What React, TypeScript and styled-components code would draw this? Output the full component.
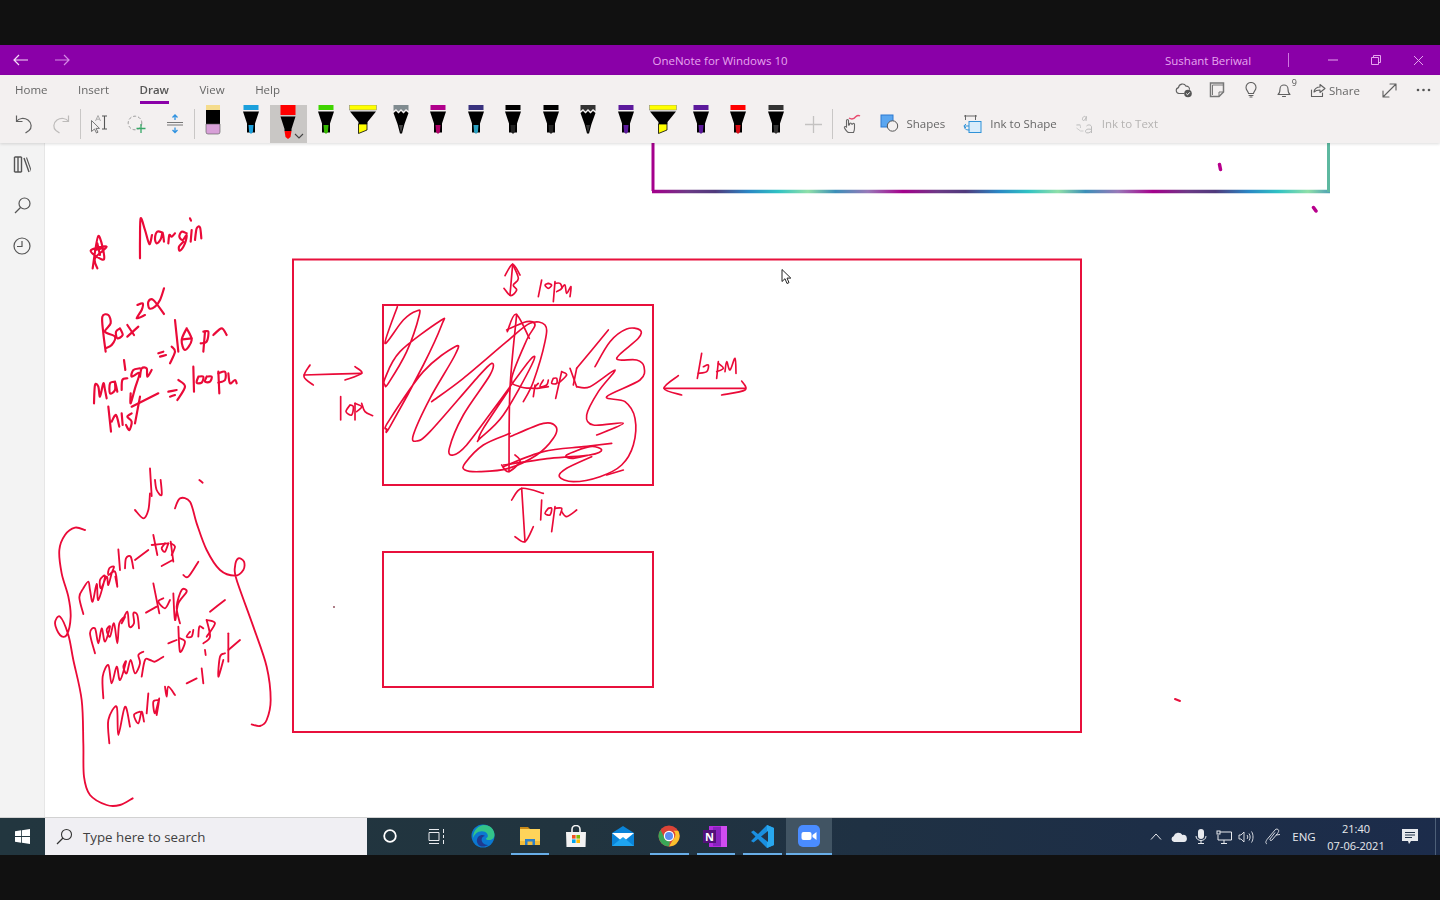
import React from "react";
import styled, { createGlobalStyle } from "styled-components";

const Global = createGlobalStyle`
  html, body { margin: 0; padding: 0; background: #111; }
  body { font-family: "Open Sans", "Noto Sans", "Liberation Sans", sans-serif; overflow: hidden; }
`;

const Page = styled.div`
  width: 1440px; height: 900px; display: flex; flex-direction: column; background: #111; filter: blur(.3px);
`;
const Letterbox = styled.div`height: 45px; background: #111; flex: none;`;

const TitleBar = styled.header`
  height: 30px; flex: none; background: #8a00a8; display: flex; align-items: center; color: #e6a6ee; font-size: 11.5px;
`;
const NavBtn = styled.span<{ $dim?: boolean }>`
  width: 41px; height: 30px; display: flex; align-items: center; justify-content: center;
  color: ${(p) => (p.$dim ? "#d68ae6" : "#f5dcf8")};
`;
const Title = styled.div`width: 1083px; box-sizing: border-box; padding-left: 195px; margin-left: -1px; text-align: center; padding-top: 1px;`;
const UserName = styled.div`width: 123px; padding-top: 1px; margin-left: 1px;`;
const TitleSep = styled.div`width: 1px; height: 14px; background: #cf78e0;`;
const WinControls = styled.div`display: flex; margin-left: 22px;`;
const WinBtn = styled.span`
  width: 43px; height: 30px; display: flex; align-items: center; justify-content: center; color: #e6a6ee;
`;

const Ribbon = styled.section`
  height: 68px; flex: none; background: #f3f0f0; display: flex; flex-direction: column;
  position: relative; z-index: 1; box-shadow: 0 1px 3px rgba(0,0,0,.14);
`;
const TabRow = styled.div`height: 30px; display: flex; padding-left: 15px; gap: 30.5px;`;
const Tab = styled.span<{ $active?: boolean }>`
  height: 29px; box-sizing: border-box; padding-top: 7px; font-size: 11.5px; line-height: 16px;
  color: ${(p) => (p.$active ? "#555" : "#666")}; font-weight: ${(p) => (p.$active ? 600 : 400)};
  border-bottom: 3px solid ${(p) => (p.$active ? "#8a00a8" : "transparent")};
`;
const RightTools = styled.div`margin-left: auto; display: flex; height: 30px; color: #555;`;
const RightIcon = styled.span<{ $w?: number }>`
  width: ${(p) => p.$w ?? 33.5}px; height: 30px; display: flex; align-items: center; justify-content: center; position: relative;
`;
const BellCount = styled.sup`
  position: absolute; right: 4px; top: 3px; font-size: 9px; line-height: 10px; margin: 0; color: #555;
`;
const ShareBtn = styled.span`
  width: 71px; box-sizing: border-box; padding-left: 9px; display: flex; align-items: center; gap: 3px; font-size: 11.5px; color: #666;
`;
const ToolRow = styled.div`height: 38px; display: flex; padding-left: 5px;`;
const ToolBtn = styled.span`
  width: 37.5px; height: 38px; flex: none; display: flex; align-items: center; justify-content: center;
`;
const Divider = styled.span`
  width: 1px; height: 30px; margin-top: 4px; background: #c9c7c6; flex: none;
`;
const PenSlot = styled.span<{ $selected?: boolean }>`
  width: 37.5px; height: 38px; flex: none; display: flex; justify-content: center; position: relative;
  background: ${(p) => (p.$selected ? "#c9c7c5" : "transparent")};
`;
const PenChevron = styled.svg`position: absolute; right: 3px; bottom: 4px;`;
const TextTools = styled.div`display: flex; gap: 18px; margin-left: 9px;`;
const TextTool = styled.span<{ $off?: boolean }>`
  display: flex; align-items: center; gap: 8px; font-size: 11.5px; height: 38px; box-sizing: border-box; padding-bottom: 1px;
  color: ${(p) => (p.$off ? "#b5b3b2" : "#666")};
`;

const Body = styled.main`flex: 1; display: flex; min-height: 0;`;
const Rail = styled.nav`
  width: 45px; flex: none; box-sizing: border-box; background: #f3f3f3; border-right: 1px solid #e6e6e6;
  display: flex; flex-direction: column; align-items: center; padding-top: 7.5px; gap: 14px; color: #555;
`;
const RailIcon = styled.span`width: 27px; height: 27px; display: flex; align-items: center; justify-content: center;`;
const Canvas = styled.svg`flex: 1; display: block; background: #fff;`;

const Taskbar = styled.footer`
  height: 37px; flex: none; display: flex; padding-right: 4.5px; box-sizing: border-box; position: relative; box-shadow: 0 -1px 0 #d2d2d2;
  background: linear-gradient(90deg, #22363f 0%, #21343f 40%, #1d2e47 80%, #1c2c4b 100%); color: #e8eaee;
`;
const StartBtn = styled.span`width: 45px; display: flex; align-items: center; justify-content: center;`;
const SearchBox = styled.div`
  width: 322px; flex: none; box-sizing: border-box; background: #f0eff3; display: flex; align-items: center; gap: 10px; padding-left: 11px;
  color: #404040; font-size: 13.3px;
`;
const TaskCell = styled.span<{ $active?: boolean; $run?: boolean }>`
  width: 46.5px; flex: none; display: flex; align-items: center; justify-content: center; position: relative; padding-bottom: 1px; box-sizing: border-box;
  background: ${(p) => (p.$active ? "#415463" : "transparent")};
  &::after {
    content: ""; display: ${(p) => (p.$run || p.$active ? "block" : "none")};
    position: absolute; bottom: 0; height: 2px; left: ${(p) => (p.$active ? 0 : 4)}px; right: ${(p) => (p.$active ? 0 : 4)}px; background: #68aee8;
  }
`;
const Tray = styled.div`margin-left: auto; display: flex; align-items: center;`;
const TrayIcon = styled.span<{ $w?: number }>`
  width: ${(p) => p.$w ?? 22.5}px; height: 37px; display: flex; align-items: center; justify-content: center; font-size: 11.5px;
`;
const Clock = styled.div`
  width: 73px; text-align: center; font-size: 11px; line-height: 17px;
`;
const ShowDesktop = styled.span`width: 8px; height: 37px; box-sizing: border-box; border-right: 1px solid #4d5f78;`;

const G = "#606060";

type PenKind = "pen" | "pencil" | "hl" | "eraser";
function Pen({ kind = "pen", cap, tip, selected }: { kind?: PenKind; cap: string; tip?: string; selected?: boolean }) {
  const t = tip ?? cap;
  return (
    <PenSlot $selected={selected}>
      <svg width="30" height="38" viewBox="0 0 30 38">
        {kind === "eraser" && (
          <>
            <rect x="8" y="0" width="14" height="5" fill={cap} />
            <rect x="8" y="5" width="14" height="14" fill="#000" />
            <path d="M8 19h14v8q0 2-2 2H10q-2 0-2-2z" fill={t} stroke="#555" strokeWidth=".6" />
          </>
        )}
        {kind === "pen" && !selected && (
          <>
            <rect x="7.5" y="0" width="15" height="5" fill={cap} />
            <path d="M7 6.5h16l-4 12v9h-8v-9z" fill="#000" />
            <path d="M12.5 20h5l-.6 7L15 29l-1.9-2z" fill={t} />
          </>
        )}
        {selected && (
          <>
            <rect x="7.5" y="0" width="15" height="10" fill={cap} />
            <path d="M7.5 11.500h15l-4 12.500v2h-7v-2z" fill="#000" />
            <path d="M11.500 26h7l-1 6-2.500 2-2.500-2z" fill={cap} />
          </>
        )}
        {kind === "pencil" && (
          <>
            <path d="M7.500 0h15v6l-2.500-2-2.500 2.500-2.500-2.500-2.500 2.500L10 4l-2.500 2z" fill={cap} />
            <path d="M7.500 8 10 6l2.500 2.500L15 6l2.500 2.500L20 6l2.500 2-4 11-2.500 9.500h-2L11.500 19z" fill="#000" />
            <path d="M13 20h4l-2 8z" fill={t} />
          </>
        )}
        {kind === "hl" && (
          <>
            <rect x="1.500" y="0" width="27" height="5" fill={cap} stroke="#777" strokeWidth=".5" />
            <path d="M2 6.500h26L19.500 17v2h-9v-2z" fill="#000" />
            <path d="M10.500 19h8.500v6l-8.500 3.500z" fill={cap} stroke="#000" strokeWidth=".8" />
          </>
        )}
      </svg>
      {selected && (
        <PenChevron width="10" height="6" viewBox="0 0 10 6">
          <path d="M1 1l4 4 4-4" fill="none" stroke="#444" strokeWidth="1.100" />
        </PenChevron>
      )}
    </PenSlot>
  );
}

const smooth = (s: string) => {
  const n = s.trim().split(/\s+/).map(Number);
  const p: [number, number][] = [];
  for (let i = 0; i + 1 < n.length; i += 2) p.push([n[i], n[i + 1]]);
  let d = `M${p[0][0]} ${p[0][1]}`;
  for (let i = 0; i < p.length - 1; i++) {
    const a = p[Math.max(0, i - 1)], b = p[i], c = p[i + 1], e = p[Math.min(p.length - 1, i + 2)];
    d += `C${b[0] + (c[0] - a[0]) / 6} ${b[1] + (c[1] - a[1]) / 6} ${c[0] - (e[0] - b[0]) / 6} ${c[1] - (e[1] - b[1]) / 6} ${c[0]} ${c[1]}`;
  }
  return d;
};

function Ink({ x, y, w = 5, strokes }: { x: number; y: number; w?: number; strokes: string[] }) {
  return (
    <g transform={`translate(${x} ${y}) scale(${1 / 3})`} fill="none" stroke="#ea0a38" strokeWidth={w} strokeLinecap="round" strokeLinejoin="round">
      {strokes.map((s, i) => <path key={i} d={smooth(s)} />)}
    </g>
  );
}

const notes = [
  "158 205 175 108 192 178 152 152 200 140 165 175 172 205",
  "172 130 180 165", "165 150 185 145",
  "300 175 300 120 302 55 315 90 328 132 336 105",
  "368 98 352 95 345 115 350 130 362 118 368 98 372 125",
  "385 130 388 105 395 110 405 100",
  "440 100 425 95 418 110 428 120 440 105 435 130 420 152 417 140 430 125",
  "452 125 455 90", "450 55 453 62",
  "465 120 470 85 480 82 484 115",
  "197 455 190 400 187 350 205 345 212 370 195 395 225 410 215 435 197 445",
  "240 385 228 395 232 415 248 405 240 385",
  "262 375 282 405", "295 380 262 410",
  "292 315 308 310 305 330 290 355 315 345",
  "372 265 360 300 345 320 328 325 325 305 340 300 372 342",
  "162 610 165 555 175 560 180 590 190 550 195 570 200 595",
  "225 545 210 550 210 580 225 570 225 545 232 575",
  "245 570 247 540 262 535",
  "300 505 280 510 275 530 298 520 285 565 272 610 272 580",
  "252 480 256 510",
  "300 530 305 505 320 505 322 530 335 510",
  "355 460 370 455", "360 470 378 465", "395 440 405 455 390 490",
  "405 360 415 455",
  "440 385 425 420 435 450 455 420 440 385", "428 418 455 415",
  "495 395 490 455", "490 395 505 395 500 425 482 430",
  "520 405 545 385 560 405",
  "205 620 213 695", "215 665 228 645 238 680",
  "245 640 248 675", "275 640 262 650 275 665 268 690 258 675",
  "300 590 285 670", "275 620 355 580",
  "385 575 410 570", "390 590 405 585", "415 540 435 560 412 600",
  "460 500 462 575",
  "475 530 470 548 485 548 490 530 475 530", "500 530 495 545 510 545 515 530 500 530",
  "535 515 538 580", "535 520 555 515 555 540 535 548",
  "565 520 570 550 585 540 590 550",
];

const list = [
  "135 210 105 203 75 225 58 270 65 340 85 410 92 470 80 525 60 525 45 490 60 470 85 525 100 600 125 720 130 850 132 950 150 1005 200 1035 240 1035 278 1015",
  "405 145 420 115 450 125 470 190 500 270 540 330 585 347 610 330 612 305 595 295 585 320 590 360 640 500 680 620 692 720 680 780 660 798 635 793",
  "285 150 310 175 325 150 330 100", "330 25 335 108", "345 60 350 90 365 105 362 60",
  "478 60 488 68",
  "130 462 118 412 130 385 145 365 150 390 158 425 170 372 175 420 195 350 180 360 183 385 200 350 205 375 215 340 222 320 208 325 205 345 225 335 232 380 226 350",
  "235 268 240 330", "255 325 258 295 272 290 280 325",
  "285 300 325 270", "340 225 352 285", "335 255 385 250", "375 250 365 265 375 275 385 250",
  "392 245 400 305", "392 250 405 260 395 285", "365 318 398 300",
  "165 580 150 520 165 505 175 550 185 505 195 545 210 500 200 510 210 530 222 490 232 550 238 490 255 470 245 490 262 455 268 500 282 490 280 460 292 465 297 505",
  "318 458 350 440", "340 370 358 460", "370 415 355 425 375 445 390 420",
  "400 400 405 480 415 430 440 395 425 390 410 440 420 490", "430 345 445 350 475 305",
  "190 715 188 650 205 615 215 670 230 620 240 660 258 605 250 620 260 640 272 600 285 640 300 610 295 585 310 575",
  "305 650 315 600 330 600 345 605 370 590", "385 550 410 540",
  "415 500 420 575 435 545 420 535", "450 515 440 530 455 530 460 510", "475 530 478 500 490 505",
  "500 480 510 530 490 550", "500 480 525 490 500 530", "510 455 555 420",
  "208 850 205 780 230 740 235 825 255 740 270 800",
  "300 755 282 765 295 790 305 755 312 785", "325 700 320 760",
  "355 720 340 725 345 760 358 715 350 765", "375 680 380 710 385 680 405 705",
  "440 670 470 655", "485 625 490 670", "495 570 497 585",
  "555 580 540 590 535 650 550 600", "565 520 565 605", "565 570 600 540",
];

const boxes = [
  "645 62 668 28 690 60", "668 28 685 70 670 90 680 105 662 122 642 100", "668 28 660 120",
  "755 75 745 125", "775 85 765 90 775 100 785 90 775 85", "795 80 790 140",
  "795 85 810 85 815 100 800 110", "815 100 825 90 830 115 843 95 840 125",
  "60 330 42 365 70 390", "42 360 215 355", "195 335 215 355 165 375",
  "152 425 152 495", "180 450 168 470 185 480 190 455 180 450", "195 445 195 495",
  "195 445 215 455 200 470", "215 445 225 470 248 482",
  "1165 362 1122 400 1175 420", "1122 400 1365 400", "1355 378 1365 405 1295 420",
  "1235 295 1222 370", "1240 335 1255 330 1250 350 1225 355", "1285 320 1280 370",
  "1285 325 1300 340 1280 350", "1305 350 1310 320 1320 345 1335 310 1338 355",
  "665 735 695 700 760 715", "695 700 705 860", "675 845 705 860 730 815",
  "755 735 752 795", "775 760 765 775 780 780 785 760 775 760", "795 755 785 830",
  "795 760 815 760 810 780", "815 770 830 785 860 765",
  "322 155 285 265 340 195 380 168 388 180 350 290 295 385 285 390 285 370 330 290 450 198 455 210 400 330 300 515 290 522 295 500 400 350 495 275 495 300 420 430 370 540 380 558 420 530 560 370 605 325 600 360 520 480 478 580 490 600 530 570 620 450 720 315 725 330 640 480 570 550 565 555 580 520 660 400",
  "425 440 520 370 650 260 720 205 765 210 765 260 730 380 700 440",
  "650 225 710 200 735 210 710 255 665 370 690 395 730 400",
  "735 390 730 425", "760 375 750 395 770 390 775 375", "745 385 735 400 775 395",
  "790 370 785 385 800 385 800 370 790 370", "815 350 797 430", "815 350 830 360 805 385",
  "840 340 860 395", "860 340 850 390",
  "955 225 860 340", "915 335 960 260 1010 222 1050 225 1045 250 980 310 1040 315 1062 335 1050 375 950 425 1005 440 1035 490 1030 570 995 630 930 665 850 680 808 665 830 640 905 605",
  "860 395 900 395 975 345 925 410 890 480 910 510 1000 505 920 540",
  "660 545 760 505 798 515 790 550 740 600 655 640 570 650 525 645 525 625 580 570 660 535",
  "640 635 760 590 880 575 965 565",
  "640 630 780 610 900 600 935 585 900 575 830 600 850 610 920 595",
  "680 178 660 400 657 650", "652 230 678 178 718 250", "635 630 655 650 690 620 675 600",
  "1000 645 950 660",
];

const pens: { kind?: PenKind; cap: string; tip?: string; selected?: boolean }[] = [
  { kind: "eraser", cap: "#f5dc8c", tip: "#d8a0d8" },
  { cap: "#1ca0dc" },
  { cap: "#ff0000", selected: true },
  { cap: "#3fd400", tip: "#35b800" },
  { kind: "hl", cap: "#ffff00" },
  { kind: "pencil", cap: "#808b90", tip: "#444" },
  { cap: "#b0008c", tip: "#b00068" },
  { cap: "#39327e", tip: "#2aa0c0" },
  { cap: "#000", tip: "#222" },
  { cap: "#000", tip: "#222" },
  { kind: "pencil", cap: "#333", tip: "#333" },
  { cap: "#5c1a9c" },
  { kind: "hl", cap: "#ffff00" },
  { cap: "#5c1a9c" },
  { cap: "#ff0000", tip: "#d80a14" },
  { cap: "#333", tip: "#333" },
];

const line = { fill: "none", stroke: G, strokeWidth: 1.1, strokeLinecap: "round", strokeLinejoin: "round" } as const;

export default function App() {
  return (
    <Page>
      <Global />
      <Letterbox />
      <TitleBar>
        <NavBtn>
          <svg width="16" height="12" viewBox="0 0 16 12"><path d="M15 6H1M6 1 1 6l5 5" fill="none" stroke="currentColor" strokeWidth="1.200" /></svg>
        </NavBtn>
        <NavBtn $dim>
          <svg width="16" height="12" viewBox="0 0 16 12"><path d="M1 6h14M10 1l5 5-5 5" fill="none" stroke="currentColor" strokeWidth="1.200" /></svg>
        </NavBtn>
        <Title>OneNote for Windows 10</Title>
        <UserName>Sushant Beriwal</UserName>
        <TitleSep />
        <WinControls>
          <WinBtn>
            <svg width="10" height="10" viewBox="0 0 10 10"><path d="M0 5h10" stroke="currentColor" /></svg>
          </WinBtn>
          <WinBtn>
            <svg width="10" height="10" viewBox="0 0 10 10"><path d="M.5 2.500h7v7h-7zM2.500 2.500v-2h7v7h-2" fill="none" stroke="currentColor" /></svg>
          </WinBtn>
          <WinBtn>
            <svg width="11" height="11" viewBox="0 0 11 11"><path d="M1 1l9 9M10 1l-9 9" stroke="currentColor" /></svg>
          </WinBtn>
        </WinControls>
      </TitleBar>

      <Ribbon>
        <TabRow>
          <Tab>Home</Tab>
          <Tab>Insert</Tab>
          <Tab $active>Draw</Tab>
          <Tab>View</Tab>
          <Tab>Help</Tab>
          <RightTools>
            <RightIcon>
              <svg width="18" height="16" viewBox="0 0 18 16">
                <path d="M4 11.500A3 3 0 0 1 3.500 5.600 4 4 0 0 1 11 4.200a3 3 0 0 1 3.500 3" {...line} />
                <path d="M4 11.500h5" {...line} />
                <circle cx="13" cy="11.500" r="3.800" fill="#555" />
                <path d="M11.200 11.500l1.300 1.300 2.300-2.500" fill="none" stroke="#fff" />
              </svg>
            </RightIcon>
            <RightIcon>
              <svg width="16" height="16" viewBox="0 0 16 16">
                <path d="M1.500 1h13v9l-4.500 4.500H1.500z" fill="#f3f0f0" stroke="#777" strokeWidth="1.500" />
                <path d="M14.500 3h-11v10" fill="none" stroke="#777" />
                <path d="M10 14.500V10h4.500" fill="none" stroke="#777" />
              </svg>
            </RightIcon>
            <RightIcon>
              <svg width="14" height="16" viewBox="0 0 14 16">
                <path d="M4.500 11.500c0-2-2.500-3-2.500-6a5 5 0 0 1 10 0c0 3-2.500 4-2.500 6z" {...line} />
                <path d="M5 13.500h4M6 15h2" {...line} />
              </svg>
            </RightIcon>
            <RightIcon>
              <svg width="16" height="16" viewBox="0 0 16 16">
                <path d="M2 12.500c1.500-1 2-2.500 2-5.500a4 4 0 0 1 8 0c0 3 .5 4.500 2 5.500zM6.500 14.500h3" {...line} />
              </svg>
              <BellCount>9</BellCount>
            </RightIcon>
            <ShareBtn>
              <svg width="16" height="16" viewBox="0 0 16 16">
                <path d="M1.500 8v6.500h11V11M4 10c0-3 3-5 6-5V2.500L15 6.500l-5 4V8C7.500 8 5.500 8.500 4 10z" {...line} />
              </svg>
              <span>Share</span>
            </ShareBtn>
            <RightIcon $w={34}>
              <svg width="15" height="15" viewBox="0 0 15 15"><path d="M1 14 14 1M8 1h6v6M1 8v6h6" {...line} /></svg>
            </RightIcon>
            <RightIcon $w={34}>
              <svg width="15" height="4" viewBox="0 0 15 4"><g fill="#555"><circle cx="2" cy="2" r="1.300" /><circle cx="7.500" cy="2" r="1.300" /><circle cx="13" cy="2" r="1.300" /></g></svg>
            </RightIcon>
          </RightTools>
        </TabRow>

        <ToolRow>
          <ToolBtn>
            <svg width="18" height="20" viewBox="0 0 18 20"><path d="M1.500 1.500v6h6M1.500 7.500C4 4 9 3.500 13 6c4 3 4 8 1 10.500L10.500 19" fill="none" stroke={G} strokeWidth="1.200" /></svg>
          </ToolBtn>
          <ToolBtn>
            <svg width="18" height="20" viewBox="0 0 18 20"><path d="M16.500 1.500v6h-6M16.500 7.500C14 4 9 3.500 5 6c-4 3-4 8-1 10.500L7.500 19" fill="none" stroke="#bdbbba" strokeWidth="1.200" /></svg>
          </ToolBtn>
          <Divider />
          <ToolBtn>
            <svg width="20" height="20" viewBox="0 0 20 20">
              <path d="M1.500 6.500v11l3-2.500 2 4 1.500-.8-2-3.800h3.500z" fill="none" stroke="#777" />
              <path d="M12 2h5M14.500 2v13M12 15h5" fill="none" stroke="#555" strokeWidth="1.100" />
              <path d="M5.500 7 8 1.500 10.500 7M6.500 5.200h3" fill="none" stroke="#999" strokeWidth=".8" />
            </svg>
          </ToolBtn>
          <ToolBtn>
            <svg width="20" height="20" viewBox="0 0 20 20">
              <circle cx="8" cy="9" r="6.800" fill="none" stroke="#999" strokeDasharray="3 2" />
              <path d="M14 10v9M9.500 14.500h9" stroke="#38a868" strokeWidth="1.300" />
            </svg>
          </ToolBtn>
          <ToolBtn>
            <svg width="18" height="20" viewBox="0 0 18 20">
              <path d="M1 8.500h16M1 11h16" stroke="#777" />
              <path d="M9 6V1M6.500 3.500 9 1l2.500 2.500M9 13.500v5M6.500 16 9 18.500l2.500-2.500" fill="none" stroke="#2f92e0" strokeWidth="1.300" />
            </svg>
          </ToolBtn>
          <Divider />
          {pens.map((p, i) => <Pen key={i} {...p} />)}
          <ToolBtn>
            <svg width="17" height="17" viewBox="0 0 17 17"><path d="M8.500 0v17M0 8.500h17" stroke="#c4c2c1" strokeWidth="1.300" /></svg>
          </ToolBtn>
          <Divider />
          <ToolBtn>
            <svg width="20" height="22" viewBox="0 0 20 22">
              <path d="M7 19.500c-2 0-3-2-4.500-4.500-.5-1 .5-2 2-1V7.500a1 1 0 0 1 2 0V12l1-.2V11a1 1 0 0 1 2 0l1 .2a1 1 0 0 1 2 0v4c0 2-.5 3-1 4.300z" fill="none" stroke="#666" strokeWidth="1.100" />
              <path d="M7 5C10 7 12 6 14 3.500c1-1 2.500-1.500 4-.5" fill="none" stroke="#e84a6e" strokeWidth="1.400" />
            </svg>
          </ToolBtn>
          <TextTools>
            <TextTool>
              <svg width="19" height="20" viewBox="0 0 19 20">
                <rect x="1" y="1" width="12" height="12" fill="#5aa6f0" stroke="#2d78d0" />
                <circle cx="12.500" cy="12" r="5.200" fill="#f3f0f0" stroke="#555" />
              </svg>
              <span>Shapes</span>
            </TextTool>
            <TextTool>
              <svg width="19" height="20" viewBox="0 0 19 20">
                <path d="M1 2h13M2.500 1v5M12.500 1v5" stroke="#666" fill="none" />
                <rect x="6" y="7.500" width="12" height="11" fill="#d8ecfb" stroke="#2f92d8" />
                <path d="M6 12H1.500M3 10 .8 12 3 14M1.500 12c0 3 1 4 5 4" fill="none" stroke="#2f92d8" />
              </svg>
              <span>Ink to Shape</span>
            </TextTool>
            <TextTool $off>
              <svg width="19" height="20" viewBox="0 0 18 20">
                <path d="M10 2.500c-3-1-4 4-2 4s2-3 3-4l-.5 4.500" fill="none" stroke="#bbb" />
                <path d="M1 11c4-1 4 0 4 3M1 14l4 3h3M5 11H1" fill="none" stroke="#ccc" />
                <path d="M11 12c2-2 5-1 5 1v6m0-3.500c-4-1-6 0-6 2s4 2 6-.5" fill="none" stroke="#bbb" />
              </svg>
              <span>Ink to Text</span>
            </TextTool>
          </TextTools>
        </ToolRow>
      </Ribbon>

      <Body>
        <Rail>
          <RailIcon>
            <svg width="18" height="17" viewBox="0 0 18 17">
              <path d="M1.500 1v15M5 1v15M8.500 1v15M1.500 1h7M1.500 16h7M11 2l5 14" fill="none" stroke="#555" strokeWidth="1.400" />
              <path d="M13.500 1.500l5 14" stroke="#555" strokeWidth="1.100" />
            </svg>
          </RailIcon>
          <RailIcon>
            <svg width="17" height="17" viewBox="0 0 17 17">
              <circle cx="10.500" cy="6.500" r="5.500" fill="none" stroke="#555" strokeWidth="1.200" />
              <path d="M6.500 10.500 1 16" stroke="#555" strokeWidth="1.300" />
            </svg>
          </RailIcon>
          <RailIcon>
            <svg width="18" height="18" viewBox="0 0 18 18">
              <circle cx="9" cy="9" r="8" fill="none" stroke="#555" strokeWidth="1.200" />
              <path d="M9 4v5.500H4" fill="none" stroke="#555" strokeWidth="1.200" />
            </svg>
          </RailIcon>
        </Rail>
        <Canvas viewBox="45 143 1395 675" width="1395" height="675">
          <defs>
            <linearGradient id="galaxy" gradientUnits="userSpaceOnUse" x1="653" x2="903" y1="0" y2="0" spreadMethod="repeat">
              <stop offset="0" stopColor="#a4008c" />
              <stop offset=".14" stopColor="#6b3a86" />
              <stop offset=".25" stopColor="#4f3a7c" />
              <stop offset=".38" stopColor="#2a86c4" />
              <stop offset=".5" stopColor="#30c2c4" />
              <stop offset=".62" stopColor="#8fdfa8" />
              <stop offset=".73" stopColor="#3c8fb8" />
              <stop offset=".86" stopColor="#9878b8" />
              <stop offset="1" stopColor="#a4008c" />
            </linearGradient>
          </defs>
          <path d="M653 143v48" stroke="#a4008c" strokeWidth="3" fill="none" />
          <path d="M652 191.500h678" stroke="url(#galaxy)" strokeWidth="3.500" fill="none" />
          <path d="M1328.500 143v49" stroke="#5db8a0" strokeWidth="3" fill="none" />
          <path d="M1219.500 164.500l1 5M1313.500 207.500l2.500 3.500" stroke="#b8008c" strokeWidth="3.500" strokeLinecap="round" />
          <g fill="none" stroke="#e8103c" strokeWidth="2">
            <rect x="293" y="259.500" width="788" height="472.500" />
            <rect x="383" y="305" width="270" height="180" />
            <rect x="383" y="552" width="270" height="135" />
          </g>
          <Ink x={40} y={200} w={6.500} strokes={notes} />
          <Ink x={40} y={460} w={5.500} strokes={list} />
          <Ink x={290} y={255} w={5} strokes={boxes} />
          <path d="M1175 699l5 2" stroke="#e8103c" strokeWidth="2" strokeLinecap="round" />
          <circle cx="334" cy="607" r=".9" fill="#884050" />
          <path d="M782 269.500v12l3-2.800 2 4.800 2-.9-2-4.500h3.800z" fill="#fff" stroke="#222" strokeWidth="1" />
        </Canvas>
      </Body>

      <Taskbar>
        <StartBtn>
          <svg width="15" height="15" viewBox="0 0 15 15"><path d="M0 2.200 6.200 1.300V7H0zM7 1.200 15 0v7H7zM0 8h6.200v5.700L0 12.800zM7 8h8v7l-8-1.200z" fill="#fff" /></svg>
        </StartBtn>
        <SearchBox>
          <svg width="17" height="17" viewBox="0 0 17 17">
            <circle cx="10.500" cy="6.500" r="5" fill="none" stroke="#333" strokeWidth="1.100" />
            <path d="M7 10 1 16" stroke="#333" strokeWidth="1.200" />
          </svg>
          <span>Type here to search</span>
        </SearchBox>
        <TaskCell>
          <svg width="14" height="14" viewBox="0 0 14 14"><circle cx="7" cy="7" r="5.800" fill="none" stroke="#fff" strokeWidth="1.800" /></svg>
        </TaskCell>
        <TaskCell>
          <svg width="17" height="15" viewBox="0 0 17 15"><path d="M1 .5h10M1 14.500h10M3 3.500h8v8H1v-8zM15.500 0v4M15.500 6v3M15.500 11v4" fill="none" stroke="#e8eaee" /></svg>
        </TaskCell>
        <TaskCell>
          <svg width="24" height="24" viewBox="0 0 24 24">
            <circle cx="12" cy="12" r="11.500" fill="#0b78d0" />
            <path d="M2 14C2 6 8 1 13 1c6 0 10.500 4 10.500 10 0 3-2.500 5-5.500 5-2 0-3-.5-3-1.500 2-1 2.500-3 1-5-2-3-8-3-11 0C3.500 11 2.500 12.500 2 14z" fill="#33c48a" />
            <path d="M9 22c-3-2-4.500-6-1.500-9.500 2-2 5-2 6.500-.5-3 .5-4 3-3 5.500 1 2 3 3.500 6 3.500-2 1.500-5 2-8 1z" fill="#1f3a8f" />
          </svg>
        </TaskCell>
        <TaskCell $run>
          <svg width="22" height="20" viewBox="0 0 22 20">
            <path d="M1 1h8l2 2H1z" fill="#c98a18" />
            <rect x="1" y="3" width="20" height="16" fill="#ffd45a" />
            <rect x="1" y="15" width="20" height="4" fill="#f2bd3c" />
            <path d="M6 19v-6h10v6h-2.500v-3.500h-5V19z" fill="#2d7fc8" />
          </svg>
        </TaskCell>
        <TaskCell>
          <svg width="22" height="23" viewBox="0 0 22 23">
            <path d="M7 7V4.500a4 4 0 0 1 8 0V7" fill="none" stroke="#f2f2f2" strokeWidth="1.600" />
            <path d="M1 7h20l-.5 15h-19z" fill="#f2f2f2" />
            <rect x="7" y="10" width="3.600" height="3.600" fill="#f25022" />
            <rect x="11.400" y="10" width="3.600" height="3.600" fill="#7fba00" />
            <rect x="7" y="14.400" width="3.600" height="3.600" fill="#00a4ef" />
            <rect x="11.400" y="14.400" width="3.600" height="3.600" fill="#ffb900" />
          </svg>
        </TaskCell>
        <TaskCell>
          <svg width="24" height="21" viewBox="0 0 24 21">
            <path d="M1 7 12 0l11 7v13H1z" fill="#0a84d8" />
            <path d="M1 7h22l-11 9z" fill="#fff" />
            <path d="M1 20 12 11l11 9z" fill="#1ea4f0" />
          </svg>
        </TaskCell>
        <TaskCell $run>
          <svg width="22" height="22" viewBox="0 0 22 22">
            <circle cx="11" cy="11" r="10.500" fill="#db4437" />
            <path d="M20.200 5.800A10.500 10.500 0 0 1 11 21.500l4.500-7.700a5.200 5.200 0 0 0 0-8z" fill="#fbc02d" />
            <path d="M11 21.500A10.500 10.500 0 0 1 2.500 5L6.800 13.500a5.200 5.200 0 0 0 5.200 2.600z" fill="#3aa757" />
            <circle cx="11" cy="11" r="5.200" fill="#fff" />
            <circle cx="11" cy="11" r="4" fill="#5c8cf0" />
          </svg>
        </TaskCell>
        <TaskCell $run>
          <svg width="25" height="21" viewBox="0 0 25 21">
            <rect x="6" y="0" width="18" height="21" fill="#b52be0" />
            <rect x="18" y="0" width="6" height="21" fill="#d04cf0" />
            <rect x="10" y="1" width="8" height="19" fill="#8a22c0" />
            <rect x="0" y="4" width="13" height="13" fill="#521078" />
            <text x="6.500" y="14.500" fontSize="11" fontWeight="700" fill="#fff" textAnchor="middle" fontFamily="Open Sans, sans-serif">N</text>
          </svg>
        </TaskCell>
        <TaskCell $run>
          <svg width="23" height="23" viewBox="0 0 23 23">
            <path d="M16 0 7 9 2.500 5.500 0 7l4.500 4.500L0 16l2.500 1.500L7 14l9 9 7-3V3z" fill="#1a8fe0" />
            <path d="M16 0l7 3v17l-7 3z" fill="#28a7ee" />
            <path d="M17 6 10 11.500l7 5.500z" fill="#22344a" />
          </svg>
        </TaskCell>
        <TaskCell $active>
          <svg width="22" height="22" viewBox="0 0 22 22">
            <rect width="22" height="22" rx="5" fill="#4a8cff" />
            <rect x="3.500" y="7" width="10" height="8" rx="2" fill="#fff" />
            <path d="M14.500 10 18.500 7v8l-4-3z" fill="#fff" />
          </svg>
        </TaskCell>
        <Tray>
          <TrayIcon>
            <svg width="12" height="7" viewBox="0 0 12 7"><path d="M1 6.500 6 1l5 5.500" fill="none" stroke="#e8eaee" /></svg>
          </TrayIcon>
          <TrayIcon>
            <svg width="16" height="10" viewBox="0 0 16 10"><path d="M3 10a3 3 0 0 1-.4-5.800A5 5 0 0 1 11.500 3 3.500 3.500 0 0 1 13 10z" fill="#e8eaee" /></svg>
          </TrayIcon>
          <TrayIcon>
            <svg width="12" height="15" viewBox="0 0 12 15"><rect x="3" y="0" width="6" height="10" rx="3" fill="#e8eaee" /><path d="M1 7c0 6 10 6 10 0M6 12v2M3 14.500h6" fill="none" stroke="#e8eaee" /></svg>
          </TrayIcon>
          <TrayIcon>
            <svg width="16" height="14" viewBox="0 0 16 14"><path d="M4 2h11.500v8H2V5M8 10v3M5 13.500h6" fill="none" stroke="#e8eaee" /><rect x="1" y="1" width="3" height="3" fill="none" stroke="#e8eaee" /></svg>
          </TrayIcon>
          <TrayIcon>
            <svg width="16" height="14" viewBox="0 0 16 14"><path d="M1 5h2l3-3v10L3 9H1zM9 5c1 1 1 3 0 4M11 3.500c1.500 2 1.500 5 0 7M13.500 1.500c2 3 2 8 0 11" fill="none" stroke="#e8eaee" strokeWidth=".9" /></svg>
          </TrayIcon>
          <TrayIcon $w={31}>
            <svg width="16" height="17" viewBox="0 0 16 17"><path d="M2 16c-2-1-1-3 0-4.500L10 2c1-1.500 3-1 3.500 0s0 2-1 3.500L7 12c-1 1-2.500.5-2-1l5-6.500M11 7l4-.5" fill="none" stroke="#e8eaee" strokeWidth=".9" /></svg>
          </TrayIcon>
          <TrayIcon $w={31}>ENG</TrayIcon>
          <Clock>
            <div>21:40</div>
            <div>07-06-2021</div>
          </Clock>
          <TrayIcon $w={35}>
            <svg width="16" height="16" viewBox="0 0 16 16">
              <path d="M0 0h16v12H9l-2 3-1-3H0z" fill="#e8eaee" />
              <path d="M3 3.500h10M3 6h10M3 8.500h7" stroke="#22344a" />
            </svg>
          </TrayIcon>
          <ShowDesktop />
        </Tray>
      </Taskbar>
      <Letterbox />
    </Page>
  );
}
